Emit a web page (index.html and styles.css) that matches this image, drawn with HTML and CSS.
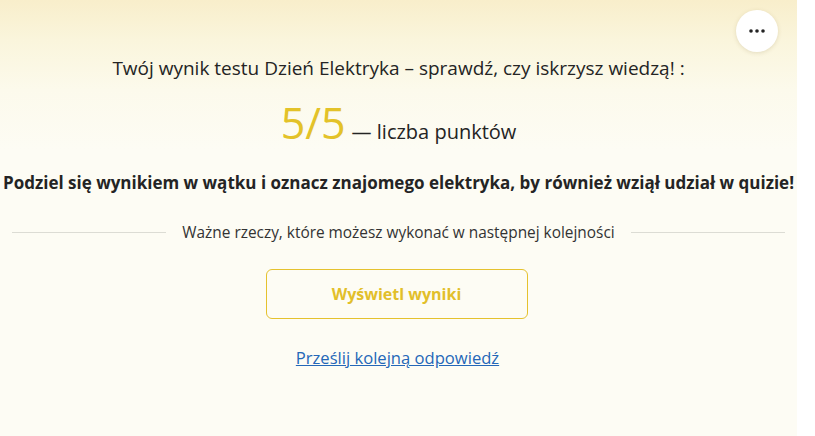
FILE: index.html
```html
<!DOCTYPE html>
<html lang="pl">
<head>
<meta charset="utf-8">
<link rel="stylesheet" href="styles.css">
</head>
<body>
<div class="page">
  <main class="panel">
    <button class="more" aria-label="Więcej opcji">
      <svg width="16" height="4" viewBox="0 0 16 4"><circle cx="2" cy="2" r="1.8"/><circle cx="8" cy="2" r="1.8"/><circle cx="14" cy="2" r="1.8"/></svg>
    </button>
    <p class="title">Twój wynik testu Dzień Elektryka – sprawdź, czy iskrzysz wiedzą! :</p>
    <p class="score"><span class="score-num">5/5</span> <span class="score-label">— liczba punktów</span></p>
    <p class="share">Podziel się wynikiem w wątku i oznacz znajomego elektryka, by również wziął udział w quizie!</p>
    <div class="divider"><span class="line"></span><span class="divider-text">Ważne rzeczy, które możesz wykonać w następnej kolejności</span><span class="line"></span></div>
    <button class="results">Wyświetl wyniki</button>
    <a class="again" href="#">Prześlij kolejną odpowiedź</a>
  </main>
  <div class="gutter"></div>
</div>
</body>
</html>
```
FILE: styles.css
```css
html, body {
  margin: 0;
  padding: 0;
  background: #ffffff;
}
body {
  font-family: "Open Sans", "Noto Sans", sans-serif;
  color: #242424;
}
.page {
  display: flex;
  width: 815px;
  height: 436px;
  overflow: hidden;
}
.panel {
  position: relative;
  width: 797px;
  flex: none;
  display: flex;
  flex-direction: column;
  align-items: center;
  background: linear-gradient(to bottom, #f8eecb 0px, #faf5dc 40px, #fcfaec 90px, #fdfcf4 150px, #fdfcf4 100%);
}
.gutter {
  flex: 1;
  background: #ffffff;
}
.more {
  position: absolute;
  top: 10px;
  right: 19px;
  width: 42px;
  height: 42px;
  border-radius: 50%;
  border: none;
  background: #ffffff;
  box-shadow: 0 1px 4px rgba(120, 100, 40, 0.18);
  display: flex;
  align-items: center;
  justify-content: center;
  padding: 0;
  fill: #242424;
}
.title {
  margin: 55px 0 0;
  font-size: 19px;
  line-height: 26px;
  white-space: nowrap;
}
.score {
  margin: 17px 0 0;
  display: flex;
  align-items: baseline;
  gap: 6px;
  white-space: nowrap;
}
.score-num {
  font-size: 43px;
  line-height: 50px;
  color: #e3c229;
}
.score-label {
  font-size: 20px;
}
.share {
  margin: 23px 0 0;
  font-size: 17px;
  line-height: 24px;
  font-weight: 700;
  white-space: nowrap;
}
.divider {
  margin-top: 27px;
  align-self: stretch;
  padding: 0 12px;
  display: flex;
  align-items: center;
  gap: 16px;
}
.line {
  flex: 1;
  height: 1px;
  background: #dcdcd4;
}
.divider-text {
  font-size: 15.4px;
  line-height: 21px;
  color: #333333;
  white-space: nowrap;
}
.results {
  margin: 26px 4px 0 0;
  width: 262px;
  height: 50px;
  border: 1px solid #e5c22e;
  border-radius: 6px;
  background: transparent;
  color: #e2bf2a;
  font-family: inherit;
  font-size: 16px;
  font-weight: 700;
}
.again {
  margin: 27px 2px 0 0;
  font-size: 16.6px;
  line-height: 23px;
  color: #2467b8;
  text-decoration: underline;
}
```
